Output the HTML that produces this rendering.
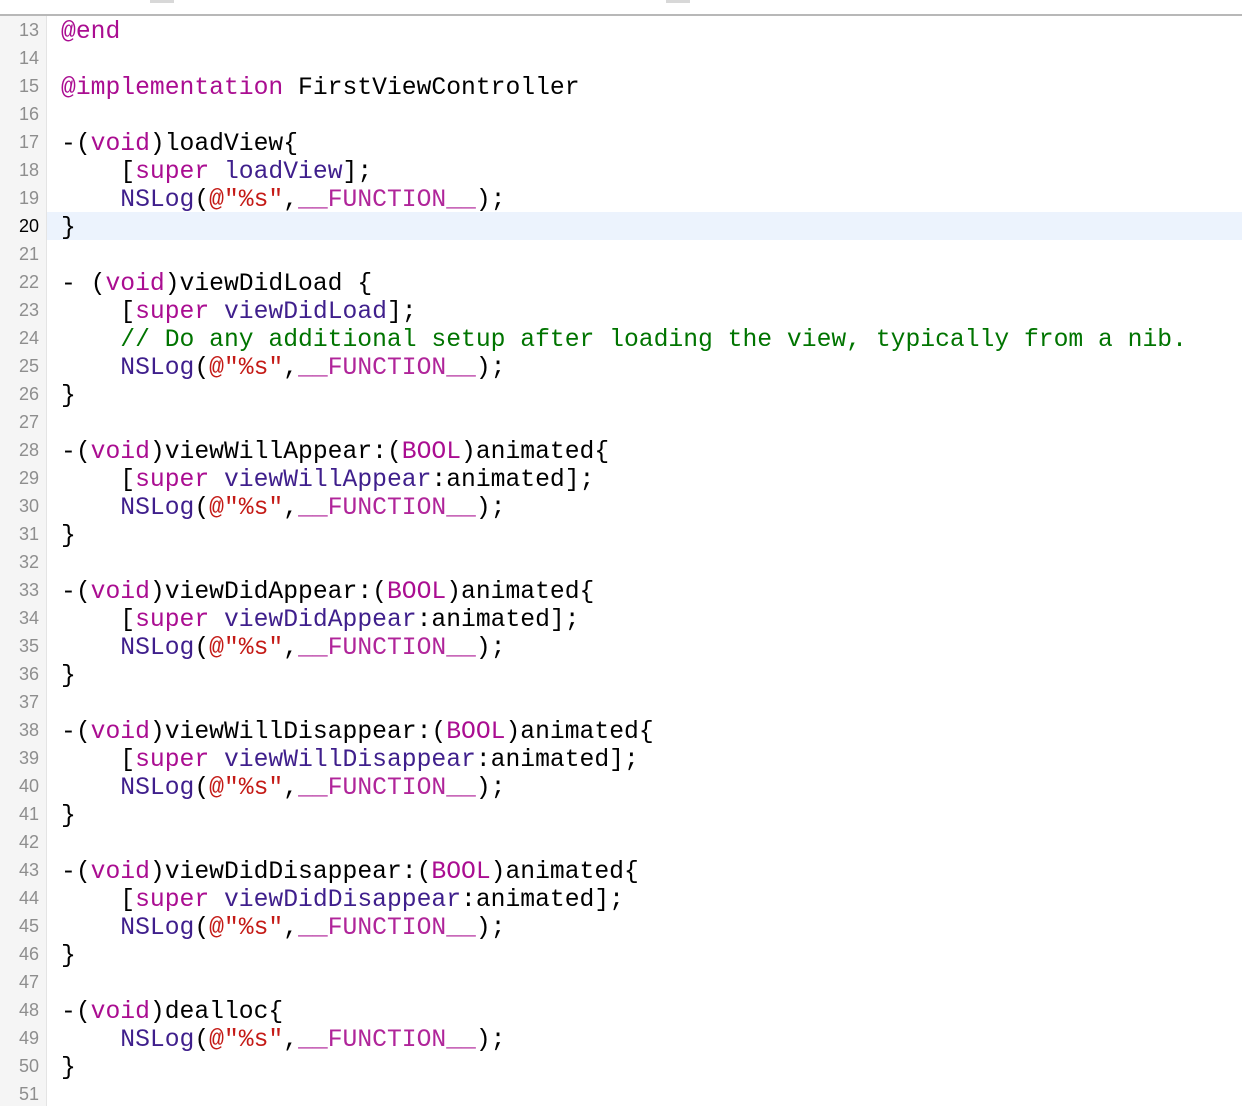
<!DOCTYPE html>
<html><head><meta charset="utf-8"><style>
html,body{margin:0;padding:0;background:#fff;width:1242px;height:1106px;overflow:hidden;position:relative}
.top{position:absolute;left:0;top:14px;width:1242px;height:2px;background:#b8b8b8}
.tab{position:absolute;top:0;height:3px;width:24px;background:#d8d8d8}
.gut{position:absolute;left:0;top:16px;width:46px;height:1090px;background:#f5f5f5;border-right:1px solid #e4e4e4}
.hl{position:absolute;left:47px;top:212px;width:1195px;height:28px;background:#ecf3fd}
.ln{position:absolute;left:0;width:39px;text-align:right;font:18px "Liberation Sans",sans-serif;color:#8e8e8e;line-height:28px}
.code{position:absolute;left:61px;font:24.7px "Liberation Mono",monospace;line-height:28px;white-space:pre;color:#000}
.k{color:#aa0d91}.m{color:#3f1f8c}.s{color:#c41a16}.c{color:#007400}.f{color:#b0259a}
</style></head><body>
<div class="tab" style="left:150px"></div><div class="tab" style="left:666px"></div>
<div class="top"></div>
<div class="gut"></div>
<div class="hl"></div>
<div class="ln" style="top:16px">13<br>14<br>15<br>16<br>17<br>18<br>19<br><span style="color:#000">20</span><br>21<br>22<br>23<br>24<br>25<br>26<br>27<br>28<br>29<br>30<br>31<br>32<br>33<br>34<br>35<br>36<br>37<br>38<br>39<br>40<br>41<br>42<br>43<br>44<br>45<br>46<br>47<br>48<br>49<br>50<br>51</div>
<div class="code" style="top:18px"><span class="k">@end</span>

<span class="k">@implementation</span> FirstViewController

-(<span class="k">void</span>)loadView{
    [<span class="k">super</span> <span class="m">loadView</span>];
    <span class="m">NSLog</span>(<span class="s">@"%s"</span>,<span class="f">__FUNCTION__</span>);
}

- (<span class="k">void</span>)viewDidLoad {
    [<span class="k">super</span> <span class="m">viewDidLoad</span>];
    <span class="c">// Do any additional setup after loading the view, typically from a nib.</span>
    <span class="m">NSLog</span>(<span class="s">@"%s"</span>,<span class="f">__FUNCTION__</span>);
}

-(<span class="k">void</span>)viewWillAppear:(<span class="k">BOOL</span>)animated{
    [<span class="k">super</span> <span class="m">viewWillAppear</span>:animated];
    <span class="m">NSLog</span>(<span class="s">@"%s"</span>,<span class="f">__FUNCTION__</span>);
}

-(<span class="k">void</span>)viewDidAppear:(<span class="k">BOOL</span>)animated{
    [<span class="k">super</span> <span class="m">viewDidAppear</span>:animated];
    <span class="m">NSLog</span>(<span class="s">@"%s"</span>,<span class="f">__FUNCTION__</span>);
}

-(<span class="k">void</span>)viewWillDisappear:(<span class="k">BOOL</span>)animated{
    [<span class="k">super</span> <span class="m">viewWillDisappear</span>:animated];
    <span class="m">NSLog</span>(<span class="s">@"%s"</span>,<span class="f">__FUNCTION__</span>);
}

-(<span class="k">void</span>)viewDidDisappear:(<span class="k">BOOL</span>)animated{
    [<span class="k">super</span> <span class="m">viewDidDisappear</span>:animated];
    <span class="m">NSLog</span>(<span class="s">@"%s"</span>,<span class="f">__FUNCTION__</span>);
}

-(<span class="k">void</span>)dealloc{
    <span class="m">NSLog</span>(<span class="s">@"%s"</span>,<span class="f">__FUNCTION__</span>);
}
</div>
</body></html>
